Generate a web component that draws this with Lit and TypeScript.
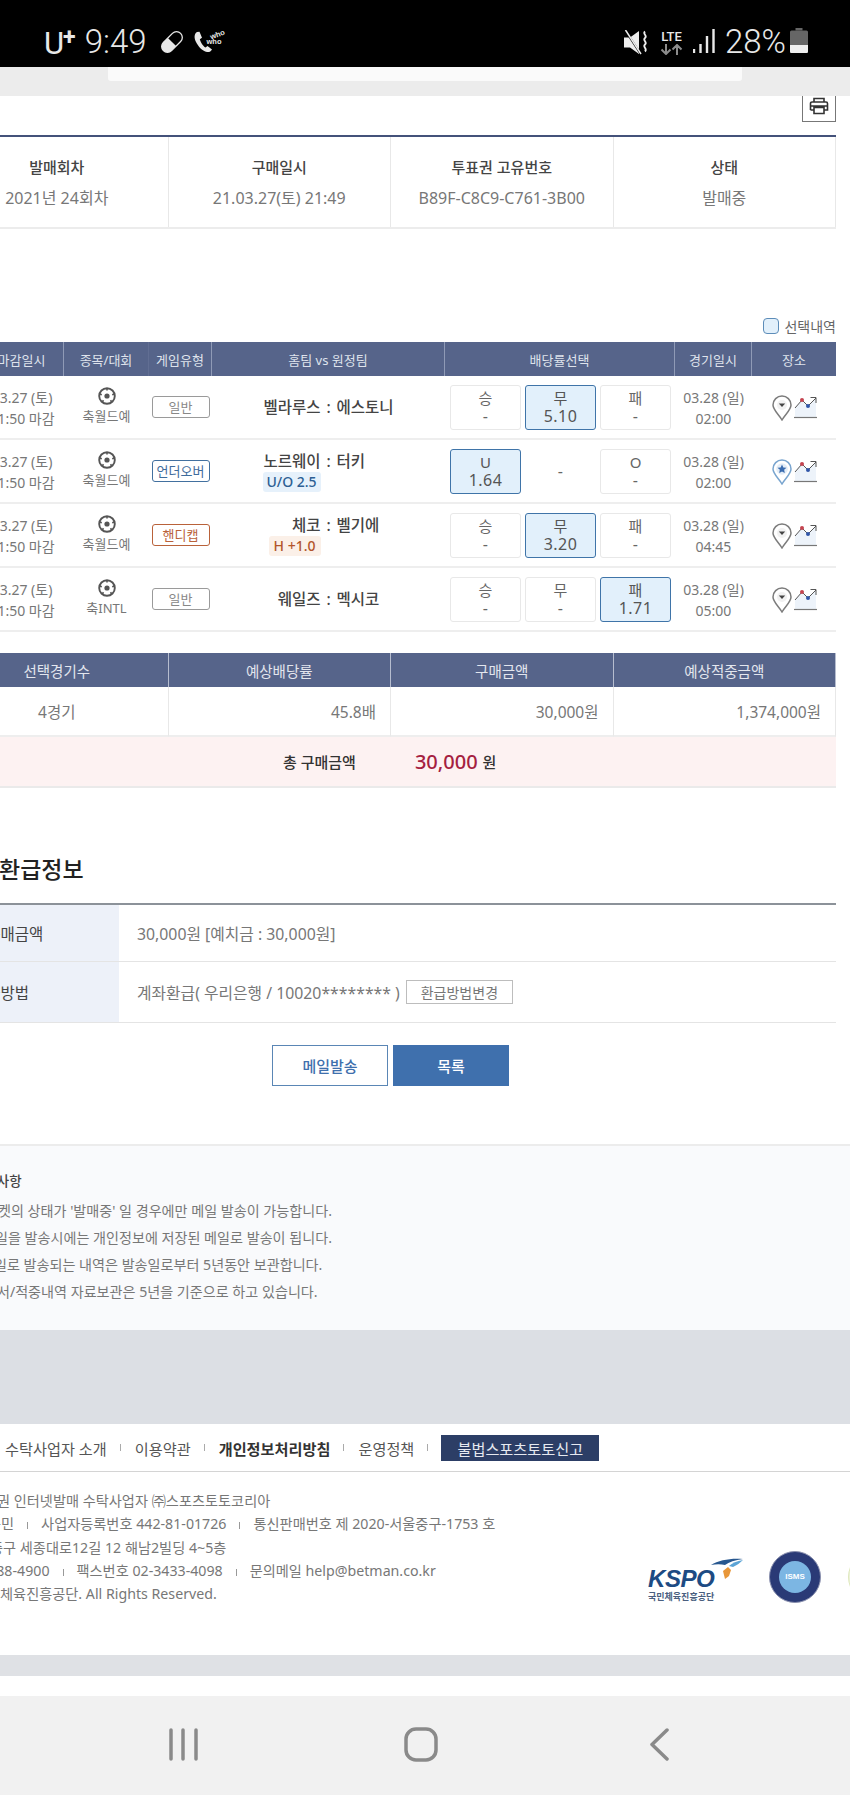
import { LitElement, html, css, svg } from "lit";
import { customElement } from "lit/decorators.js";

type Odd = { label: string; value: string; selected?: boolean; empty?: boolean };
type Row = {
  kind: string; kindClass: string; home: string; away: string; league: string;
  badge?: string; badgeClass?: string; odds: Odd[]; time: string; pin: "plain" | "star";
};

const rows: Row[] = [
  { kind: "일반", kindClass: "plain", home: "벨라루스", away: "에스토니", league: "축월드예",
    odds: [{ label: "승", value: "-" }, { label: "무", value: "5.10", selected: true }, { label: "패", value: "-" }], time: "02:00", pin: "plain" },
  { kind: "언더오버", kindClass: "blue", home: "노르웨이", away: "터키", league: "축월드예", badge: "U/O 2.5", badgeClass: "uo",
    odds: [{ label: "U", value: "1.64", selected: true }, { label: "", value: "-", empty: true }, { label: "O", value: "-" }], time: "02:00", pin: "star" },
  { kind: "핸디캡", kindClass: "orange", home: "체코", away: "벨기에", league: "축월드예", badge: "H +1.0", badgeClass: "hc",
    odds: [{ label: "승", value: "-" }, { label: "무", value: "3.20", selected: true }, { label: "패", value: "-" }], time: "04:45", pin: "plain" },
  { kind: "일반", kindClass: "plain", home: "웨일즈", away: "멕시코", league: "축INTL",
    odds: [{ label: "승", value: "-" }, { label: "무", value: "-" }, { label: "패", value: "1.71", selected: true }], time: "05:00", pin: "plain" },
];

const notes = [
  "티켓의 상태가 '발매중' 일 경우에만 메일 발송이 가능합니다.",
  "메일을 발송시에는 개인정보에 저장된 메일로 발송이 됩니다.",
  "메일로 발송되는 내역은 발송일로부터 5년동안 보관합니다.",
  "구매서/적중내역 자료보관은 5년을 기준으로 하고 있습니다.",
];

const ball = svg`<svg class="ball" width="18" height="18" viewBox="0 0 18 18"><circle cx="9" cy="9" r="7.8" fill="#fff" stroke="#555" stroke-width="1.9"/><circle cx="9" cy="9" r="2.6" fill="#555"/><path d="M9 1v2.4M1.6 7l2.2.8M16.4 7l-2.2.8M4 15.2l1.5-2M14 15.2l-1.5-2" stroke="#555" stroke-width="1.6"/></svg>`;

const pinPlain = svg`<svg width="20" height="26" viewBox="0 0 20 26"><path d="M10 1a9 9 0 0 1 9 9c0 5-6 9.500-9 15-3-5.500-9-10-9-15a9 9 0 0 1 9-9z" fill="#fff" stroke="#7c7c7c" stroke-width="1.500"/><circle cx="10" cy="10" r="5" fill="#f1f1f1"/><path d="M6.800 8.500h6.400L10 12z" fill="#444"/></svg>`;
const pinStar = svg`<svg width="20" height="26" viewBox="0 0 20 26"><path d="M10 1a9 9 0 0 1 9 9c0 5-6 9.500-9 15-3-5.500-9-10-9-15a9 9 0 0 1 9-9z" fill="#fff" stroke="#79a5cf" stroke-width="1.500"/><circle cx="10" cy="10" r="5.800" fill="#e3edf7"/><path d="M10 5.500l1.350 2.900 3.150.35-2.350 2.100.65 3.100L10 12.400l-2.800 1.550.65-3.100L5.500 8.750l3.150-.35z" fill="#3a6cb0"/></svg>`;
const chart = svg`<svg width="23" height="23" viewBox="0 0 23 23"><path d="M1 12L8 4l6 6 8-8v20H1z" fill="#edf3fa"/><path d="M1 12L8 4l6 6 8-8" fill="none" stroke="#555" stroke-width="1"/><path d="M16.500 1.500H22V7" fill="none" stroke="#555" stroke-width="1"/><circle cx="8" cy="4" r="2" fill="#c4434f"/><circle cx="14" cy="10" r="2" fill="#2f55a8"/><path d="M0 21.500h23" stroke="#777" stroke-width="1.200"/></svg>`;
const printer = svg`<svg width="20" height="18" viewBox="0 0 20 18"><path d="M5 5V1.500h10V5M1.500 13V6.500a1.500 1.500 0 0 1 1.500-1.500h14a1.500 1.500 0 0 1 1.500 1.500V13H15M5 13H1.500M1.500 9h17M5 10.500h10v6H5z" fill="none" stroke="#333" stroke-width="1.600"/></svg>`;
const pill = svg`<svg width="26" height="26" viewBox="0 0 26 26"><g transform="rotate(-45 13 13)"><rect x="0.800" y="7.200" width="24.400" height="11.600" rx="5.800" fill="none" stroke="#e8e8e8" stroke-width="1.300"/><path d="M13 7.200H6.600a5.800 5.800 0 0 0 0 11.600H13z" fill="#e8e8e8"/></g></svg>`;
const phone = svg`<svg width="20" height="22" viewBox="0 0 20 22"><path d="M3 1C0 3 0 7 2 11c2 4 6 9 11 10 2 .4 4-.6 5-2.500l-4.500-3.500-2 1.500C9 15 6.500 11 5.800 8.200L8 6.800 5.500.800z" fill="#e8e8e8"/></svg>`;
const mute = svg`<svg width="26" height="25" viewBox="0 0 26 25"><path d="M1 7.500h6L16 1v23l-9-6.500H1z" fill="#eee"/><path d="M2 0l15 23" stroke="#000" stroke-width="2"/><path d="M2.500 0L18 24" stroke="#eee" stroke-width="1.500"/><path d="M22 1.500c-3 2.500 3 4 0 6.500s3 4 0 6.500 3 4 0 7" fill="none" stroke="#eee" stroke-width="1.800"/></svg>`;
const arrows = svg`<svg width="25" height="11" viewBox="0 0 25 11"><path d="M7 0v9M2.500 5.500L7 10l4.500-4.500M18 11V2M13.500 5.500L18 1l4.500 4.500" fill="none" stroke="#8c8c8c" stroke-width="2"/></svg>`;
const signal = svg`<svg width="22" height="24" viewBox="0 0 22 24"><path d="M1 24v-4M7.500 24V15M14 24V7M20.500 24V0" stroke="#e8e8e8" stroke-width="2.400"/></svg>`;
const battery = svg`<svg width="18" height="25" viewBox="0 0 18 25"><path d="M5.500 0h7v2.500H5.500z" fill="#666"/><rect x="0" y="2.500" width="18" height="22.500" rx="1.500" fill="#666"/><path d="M0 17h18v6.500a1.500 1.500 0 0 1-1.500 1.500h-15A1.500 1.500 0 0 1 0 23.500z" fill="#eee"/></svg>`;
const wing = svg`<svg class="wing" width="32" height="24" viewBox="0 0 32 24"><path d="M0 7C8 2 20 0 32 1c-8 1-14 3-18 6-4-1-9-1-14 0z" fill="#27578f"/><path d="M18 8c3-3 8-5 14-6-3 3-6 5-10 7z" fill="#5ba4d6"/><path d="M12 13l5-4 3 3-2 6-4 3z" fill="#e8973a"/></svg>`;

@customElement("app-root")
export class AppRoot extends LitElement {
  static styles = css`
    :host { display: block; width: 850px; height: 1795px; overflow: hidden; background: #fff;
      font-family: "Noto Sans", "Noto Sans CJK KR", sans-serif; color: #666; font-size: 14px; }
    .status { height: 67px; background: #000; display: flex; justify-content: space-between; align-items: center;
      padding: 17px 42px 0 44px; box-sizing: border-box; color: #e8e8e8; font-family: Roboto, sans-serif; }
    .st-l, .st-r { display: flex; align-items: center; height: 30px; }
    .carrier { font-size: 31px; font-weight: 400; line-height: 28px; margin-top: 3px; }
    .carrier sup { font-size: 23px; font-weight: 700; line-height: 0; vertical-align: 9px; margin-left: -1px; }
    .clock { font-size: 33px; font-weight: 300; margin-left: 9px; line-height: 30px; }
    .st-l .pillw { margin-left: 12px; display: flex; }
    .callw { display: flex; margin-left: 9px; align-items: center; }
    .who { display: flex; flex-direction: column; font: 700 7.500px/7px "Liberation Sans", sans-serif; margin: -9px 0 0 -7px; }
    .who .w1 { transform: rotate(-20deg); margin-left: 3px; }
    .lte { display: flex; flex-direction: column; align-items: center; margin-left: 10px; width: 25px; font: 500 13px/13px Roboto, sans-serif; gap: 1px; }
    .lte svg, .st-r > svg, .pillw svg { display: block; }
    .sig { margin-left: 9px; }
    .pct { font-size: 33px; font-weight: 300; margin-left: 10px; line-height: 30px; }
    .bat { margin-left: 4px; }

    .topband { height: 29px; background: #ececec; }
    .topbar { width: 634px; height: 14px; margin-left: 108px; background: #fafafa; border-radius: 0 0 3px 3px; }

    .page { width: 890px; margin-left: -54px; }
    .print-row { height: 26px; display: flex; justify-content: flex-end; margin-bottom: 13px; }
    .print { width: 34px; box-sizing: border-box; border: 1px solid #777; border-top: 0; display: flex; align-items: flex-start; justify-content: center; padding-top: 1px; }
    .cols4 { display: grid; grid-template-columns: repeat(4, 1fr); }
    .info { border-top: 2px solid #44527a; border-bottom: 2px solid #ececec; height: 94px; box-sizing: border-box; }
    .info > div { border-right: 1px solid #e8e8e8; text-align: center; padding-top: 18px; box-sizing: border-box; }
    .info b { display: block; font-weight: 500; font-size: 15px; line-height: 24px; color: #444; }
    .info span { display: block; font-size: 16px; line-height: 24px; margin-top: 7px; color: #777; }

    .legend { height: 16px; margin: 89px 0 8px; display: flex; justify-content: flex-end; align-items: center; gap: 5px; font-size: 14px; color: #666; }
    .legend i { width: 16px; height: 16px; box-sizing: border-box; border: 1.500px solid #5d8db9; border-radius: 4px; background: #e2f0fb; }

    .games { display: grid; grid-template-columns: 118px 85px 63px 233px 230px 77px 84px; }
    .th { height: 34px; background: #56648a; color: #dfe3ec; font-size: 13px; display: flex; align-items: center; justify-content: center; border-right: 1px solid #8f9ab6; box-sizing: border-box; }
    .th.nb { border-right-color: #616e93; }
    .th.first { padding-left: 34px; }
    .th.last { border-right: 0; }
    .td { height: 64px; border-bottom: 2px solid #eeeeee; box-sizing: border-box; display: flex; align-items: center; justify-content: center; font-size: 13px; color: #777; }
    .dt { flex-direction: column; line-height: 21px; padding-top: 1px; font-size: 14px; color: #777; }
    .dt.first { padding-left: 34px; }
    .sport { flex-direction: column; line-height: 21px; font-size: 13px; }
    .ball { display: block; margin-bottom: 1px; }
    .kind { width: 58px; height: 22px; box-sizing: border-box; border: 1px solid #9a9a9a; border-radius: 3px; font-size: 13px; line-height: 20px; text-align: center; color: #888; white-space: nowrap; }
    .kind.blue { border-color: #42709f; color: #3f6c9c; }
    .kind.orange { border-color: #b9623a; color: #b9623a; }
    .team { display: grid; grid-template-columns: 1fr 16px 1fr; align-items: center; width: 100%; font-size: 15.500px; font-weight: 500; color: #444; line-height: 20px; }
    .team .h { text-align: right; white-space: nowrap; }
    .team .c { text-align: center; }
    .team .a { white-space: nowrap; }
    .handi { grid-column: 1; justify-self: end; font-size: 14px; line-height: 20px; height: 20px; padding: 0 6px; border-radius: 3px; margin-top: 1px; font-weight: 500; white-space: nowrap; }
    .handi.uo { background: #e6f1fb; color: #2d5f94; width: 58px; box-sizing: border-box; text-align: center; padding: 0; }
    .handi.hc { background: #fbf0e8; color: #b2552c; width: 52px; box-sizing: border-box; text-align: center; padding: 0; }
    .odds { justify-content: flex-start; padding-left: 5px; gap: 4px; }
    .odd { width: 71px; height: 45px; box-sizing: border-box; border: 1px solid #e8e8e8; border-radius: 3px; display: flex; flex-direction: column; align-items: center; justify-content: center; font-size: 15px; line-height: 18px; color: #666; }
    .odd .v { font-size: 16px; letter-spacing: 0.500px; }
    .odd.sel { background: #e2f0fb; border-color: #3f74a8; color: #555; }
    .odd.none { border-color: transparent; }
    .venue { gap: 2px; padding-top: 1px; }
    .venue svg { display: block; }

    .sum { margin-top: 21px; }
    .sum .sh { height: 34px; background: #56648a; color: #e3e6ee; font-size: 14.500px; display: flex; align-items: center; justify-content: center; border-right: 1px solid #b6bdcf; box-sizing: border-box; }
    .sum .sv { height: 50px; border-right: 1px solid #e8e8e8; border-bottom: 2px solid #eee; box-sizing: border-box; display: flex; align-items: center; justify-content: flex-end; padding-right: 14px; font-size: 15.500px; color: #777; }
    .sum .sv.ctr { justify-content: center; padding: 0; }
    .total { height: 51px; background: #fdf2f2; border-bottom: 2px solid #eaeaea; box-sizing: border-box; display: flex; align-items: center; font-weight: 500; color: #333; font-size: 15px; padding-left: 337px; }
    .total em { font-style: normal; font-size: 20px; color: #a5203f; margin: 0 5px 0 59px; }

    .h2 { margin: 66px 0 18px 53px; font-size: 23px; line-height: 31px; font-weight: 500; color: #222; }
    .refund { border-top: 2px solid #8c9299; }
    .rr { display: grid; grid-template-columns: 173px 1fr; border-bottom: 1px solid #e4e4e4; box-sizing: border-box; }
    .rr.a { height: 57px; }
    .rr.b { height: 61px; }
    .rl { background: #edf1f9; display: flex; align-items: center; padding-left: 26px; font-size: 15.500px; color: #444; }
    .rv { display: flex; align-items: center; padding-left: 18px; font-size: 15.800px; color: #777; }
    .chg { width: 107px; height: 24px; box-sizing: border-box; border: 1px solid #bdbdbd; margin-left: 6px; display: flex; align-items: center; justify-content: center; font-size: 14px; color: #777; }
    .btns { display: flex; gap: 5px; justify-content: center; margin-top: 22px; width: 889px; }
    .btn { width: 116px; height: 41px; box-sizing: border-box; display: flex; align-items: center; justify-content: center; font-size: 15px; font-weight: 500; }
    .btn.o { border: 1px solid #5a86b5; color: #3f70ad; background: #fff; }
    .btn.f { background: #3f70ad; color: #fff; }

    .notes { margin-top: 58px; height: 186px; box-sizing: border-box; background: #f9fafc; border-top: 2px solid #ececec; padding: 25px 0 0 0; overflow: hidden; width: 850px; }
    .notes h4 { margin: 0 0 6px -28px; font-size: 13.500px; line-height: 20px; font-weight: 500; color: #444; }
    .notes p { margin: 0; font-size: 14.100px; line-height: 27px; color: #777; white-space: nowrap; }
    .notes p.n0 { margin-left: -15px; }
    .notes p.n1 { margin-left: -18px; }
    .notes p.n2 { margin-left: -19px; }
    .notes p.n3 { margin-left: -29px; }
    .gray { height: 94px; background: #dcdfe4; }

    .foot { height: 231px; overflow: hidden; }
    .fnav { height: 48px; border-bottom: 1px solid #d4d4d4; display: flex; align-items: center; font-size: 15.200px; color: #555; box-sizing: border-box; padding: 0 0 0 5px; }
    .fnav .s { width: 1px; height: 7px; background: #aaa; margin: 0 14px 0 13px; }
    .fnav b { font-weight: 700; color: #333; }
    .fnav .rep { width: 158px; height: 26px; background: #2c3e66; color: #e6e9f0; display: flex; align-items: center; justify-content: center; flex: none; margin-left: -1px; }
    .finfo { display: flex; }
    .flines { width: 640px; flex: none; padding-top: 17px; font-size: 14.200px; line-height: 23.300px; color: #777; white-space: nowrap; height: 130px; box-sizing: content-box; }
    .fl i { font-style: normal; display: inline-block; width: 1px; height: 7px; background: #999; margin: 0 13px; }
    .fl.l1 { margin-left: -3px; } .fl.l2 { margin-left: -12px; } .fl.l3 { margin-left: -10px; } .fl.l4 { margin-left: -20px; } .fl.l5 { margin-left: -13px; }
    .logos { display: flex; flex: none; width: 260px; }
    .kspo { margin: 96px 0 0 8px; width: 96px; position: relative; flex: none; }
    .kspo b { display: block; font: italic 700 23px/23px "Liberation Sans", sans-serif; color: #1d4b83; letter-spacing: -0.500px; transform: scaleX(1.050); transform-origin: left; }
    .kspo span { display: block; font-size: 9px; line-height: 12px; font-weight: 700; color: #4a5f7f; margin-top: 0; white-space: nowrap; }
    .kspo .wing { position: absolute; left: 63px; top: -10px; }
    .isms { width: 52px; height: 52px; border-radius: 50%; margin: 79px 0 0 25px; box-sizing: border-box; background: #2a3a76; border: 1px solid #8a90ae; display: flex; align-items: center; justify-content: center; flex: none; }
    .isms span { width: 32px; height: 32px; border-radius: 50%; background: #7cb6e3; color: #fff; font: 700 8px/32px "Liberation Sans", sans-serif; text-align: center; }
    .third { width: 52px; height: 52px; border-radius: 50%; background: #eef3dc; border: 1px solid #dfe8bd; box-sizing: border-box; margin: 79px 0 0 27px; flex: none; }

    .band { height: 21px; background: #dfe1e5; }
    .spacer { height: 20px; background: #fff; }
    .navbar { height: 99px; background: #f1f1f1; }
    .navbar svg { display: block; }
    .navrow { display: grid; grid-template-columns: 300px 240px 1fr; padding: 32px 0 0 0; }
    .navrow > :nth-child(1) { margin-left: 168px; }
    .navrow > :nth-child(2) { margin-left: 104px; margin-top: -1px; }
    .navrow > :nth-child(3) { margin-left: 109px; }
  `;

  private game(r: Row) {
    return html`
      <div class="td dt first"><span>03.27 (토)</span><span>21:50 마감</span></div>
      <div class="td sport">${ball}<span>${r.league}</span></div>
      <div class="td"><div class="kind ${r.kindClass}">${r.kind}</div></div>
      <div class="td">
        <div class="team">
          <span class="h">${r.home}</span><span class="c">:</span><span class="a">${r.away}</span>
          ${r.badge ? html`<span class="handi ${r.badgeClass}">${r.badge}</span>` : ""}
        </div>
      </div>
      <div class="td odds">
        ${r.odds.map(o => html`<div class="odd ${o.selected ? "sel" : ""} ${o.empty ? "none" : ""}">
          ${o.label ? html`<span>${o.label}</span>` : ""}<span class="v">${o.value}</span></div>`)}
      </div>
      <div class="td dt"><span>03.28 (일)</span><span>${r.time}</span></div>
      <div class="td venue">${r.pin === "star" ? pinStar : pinPlain}${chart}</div>`;
  }

  render() {
    return html`
      <div class="status">
        <div class="st-l">
          <span class="carrier">U<sup>+</sup></span><span class="clock">9:49</span>
          <span class="pillw">${pill}</span>
          <span class="callw">${phone}<span class="who"><span class="w1">who</span><span>who</span></span></span>
        </div>
        <div class="st-r">
          ${mute}
          <div class="lte"><span>LTE</span>${arrows}</div>
          <span class="sig">${signal}</span>
          <span class="pct">28%</span>
          <span class="bat">${battery}</span>
        </div>
      </div>
      <div class="topband"><div class="topbar"></div></div>

      <div class="page">
        <div class="print-row"><div class="print">${printer}</div></div>
        <div class="cols4 info">
          <div><b>발매회차</b><span>2021년 24회차</span></div>
          <div><b>구매일시</b><span>21.03.27(토) 21:49</span></div>
          <div><b>투표권 고유번호</b><span>B89F-C8C9-C761-3B00</span></div>
          <div><b>상태</b><span>발매중</span></div>
        </div>

        <div class="legend"><i></i><span>선택내역</span></div>

        <div class="games">
          <div class="th first">마감일시</div><div class="th nb">종목/대회</div><div class="th">게임유형</div>
          <div class="th">홈팀 vs 원정팀</div><div class="th">배당률선택</div><div class="th">경기일시</div><div class="th last">장소</div>
          ${rows.map(r => this.game(r))}
        </div>

        <div class="sum">
          <div class="cols4">
            <div class="sh">선택경기수</div><div class="sh">예상배당률</div><div class="sh">구매금액</div><div class="sh">예상적중금액</div>
            <div class="sv ctr">4경기</div><div class="sv">45.8배</div><div class="sv">30,000원</div><div class="sv">1,374,000원</div>
          </div>
          <div class="total"><span>총 구매금액</span><em>30,000</em><span>원</span></div>
        </div>

        <div class="h2">환급정보</div>
        <div class="refund">
          <div class="rr a"><div class="rl">총구매금액</div><div class="rv">30,000원 [예치금 : 30,000원]</div></div>
          <div class="rr b"><div class="rl">환급방법</div><div class="rv">계좌환급( 우리은행 / 10020******** )<span class="chg">환급방법변경</span></div></div>
        </div>
        <div class="btns"><div class="btn o">메일발송</div><div class="btn f">목록</div></div>
      </div>

      <div class="notes">
        <h4>유의사항</h4>
        ${notes.map((n, i) => html`<p class="n${i}">${n}</p>`)}
      </div>
      <div class="gray"></div>

      <div class="foot">
        <div class="fnav">
          <span>수탁사업자 소개</span><span class="s"></span><span>이용약관</span><span class="s"></span>
          <b>개인정보처리방침</b><span class="s"></span><span>운영정책</span><span class="s"></span>
          <span class="rep">불법스포츠토토신고</span>
        </div>
        <div class="finfo">
          <div class="flines">
            <div class="fl l1">권 인터넷발매 수탁사업자 ㈜스포츠토토코리아</div>
            <div class="fl l2">승민<i></i>사업자등록번호 442-81-01726<i></i>통신판매번호 제 2020-서울중구-1753 호</div>
            <div class="fl l3">중구 세종대로12길 12 해남2빌딩 4~5층</div>
            <div class="fl l4">1588-4900<i></i>팩스번호 02-3433-4098<i></i>문의메일 help@betman.co.kr</div>
            <div class="fl l5">국체육진흥공단. All Rights Reserved.</div>
          </div>
          <div class="logos">
            <div class="kspo">${wing}<b>KSPO</b><span>국민체육진흥공단</span></div>
            <div class="isms"><span>ISMS</span></div>
            <div class="third"></div>
          </div>
        </div>
      </div>

      <div class="band"></div>
      <div class="spacer"></div>
      <div class="navbar">
        <div class="navrow">
          <svg width="32" height="33" viewBox="0 0 32 33"><path d="M3 2v29M15 2v29M28 2v29" stroke="#8a8a8a" stroke-width="3.500" stroke-linecap="round"/></svg>
          <svg width="34" height="35" viewBox="0 0 34 35"><rect x="2" y="2" width="30" height="31" rx="10" fill="none" stroke="#8a8a8a" stroke-width="3.500"/></svg>
          <svg width="21" height="33" viewBox="0 0 21 33"><path d="M18 2L3 16.500 18 31" fill="none" stroke="#8a8a8a" stroke-width="3.500" stroke-linecap="round" stroke-linejoin="round"/></svg>
        </div>
      </div>
    `;
  }
}
